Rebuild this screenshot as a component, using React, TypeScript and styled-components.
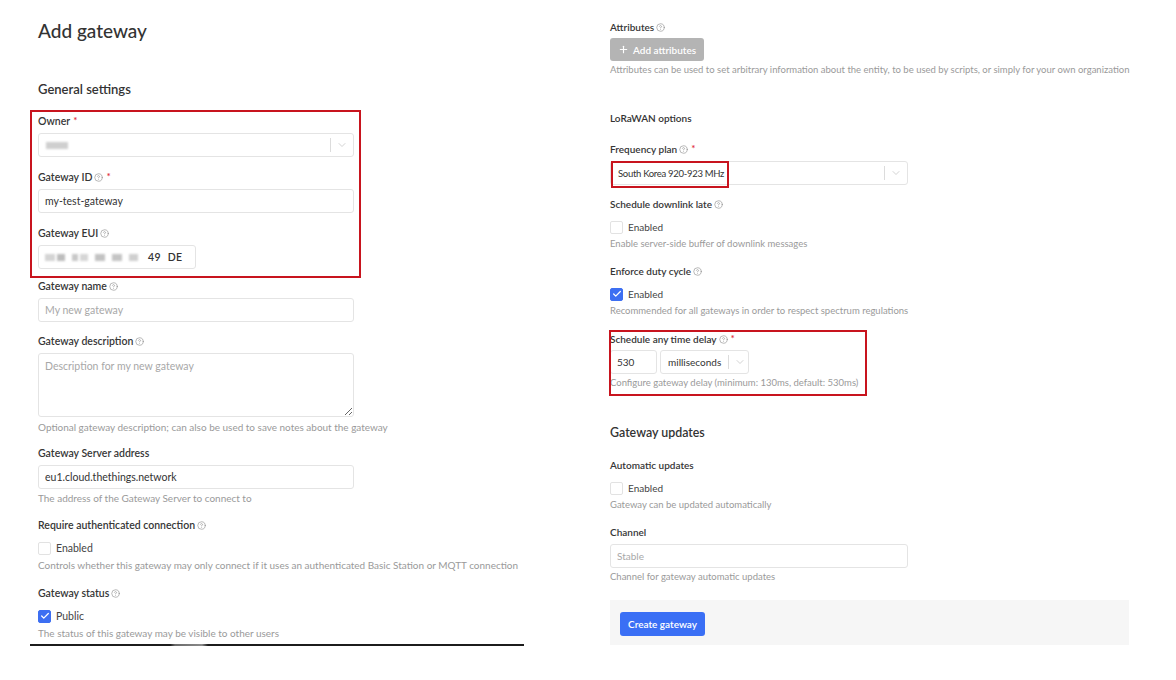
import React from 'react';
import styled, { createGlobalStyle } from 'styled-components';
import { CircleHelp, ChevronDown, Plus, Check } from 'lucide-react';

const GlobalStyle = createGlobalStyle`
  html, body {
    margin: 0;
    padding: 0;
    background: #ffffff;
  }
  body {
    font-family: Lato, "Liberation Sans", sans-serif;
    color: #333333;
    -webkit-font-smoothing: antialiased;
  }
  * {
    box-sizing: border-box;
  }
`;

const Page = styled.div`
  display: flex;
  width: 1176px;
  height: 680px;
  overflow: hidden;
`;

// the two halves of the source screenshot were captured at slightly different zoom
const LeftColumn = styled.div`
  width: 494px;
  margin-left: 30px;
  padding: 19px 0 0 8px;
  font-size: 10.5px;
`;

const RightColumn = styled.div`
  width: 519px;
  margin-left: 86px;
  padding-top: 19px;
  font-size: 10px;
`;

const PageTitle = styled.h1`
  margin: 0;
  font-size: 19px;
  line-height: 24px;
  font-weight: 500;
  color: #333;
`;

const SectionTitle = styled.h2<{ $top: number }>`
  margin: ${(p) => p.$top}px 0 0;
  font-size: 1.24em;
  line-height: 18px;
  font-weight: 600;
  color: #333;
`;

const SubTitle = styled.h3<{ $top: number }>`
  margin: ${(p) => p.$top}px 0 15px;
  font-size: 1em;
  line-height: 16px;
  font-weight: 600;
  color: #333;
`;

const Highlight = styled.div`
  width: 331px;
  margin: 12px 0 0 -8px;
  padding: 1px 5px 7px 6px;
  border: 2px solid #c8141e;
`;

const Field = styled.div<{ $gap?: number }>`
  position: relative;
  margin-bottom: ${(p) => (p.$gap === undefined ? 12 : p.$gap)}px;
`;

const Label = styled.div`
  display: flex;
  align-items: center;
  height: 16px;
  margin-bottom: 4px;
  font-size: 1em;
  font-weight: 600;
  color: #363636;
  white-space: nowrap;
`;

const Help = styled(CircleHelp)`
  margin-left: 2px;
  color: #8a8a8a;
`;

const Required = styled.span`
  align-self: flex-start;
  margin: 1px 0 0 3px;
  font-size: 10px;
  color: #e0303a;
`;

const TextInput = styled.input<{ $width?: number }>`
  display: block;
  width: ${(p) => p.$width || 316}px;
  height: 24px;
  padding: 0 6px;
  border: 1px solid #e4e4e4;
  border-radius: 3px;
  font-family: inherit;
  font-size: 1em;
  color: #333;
  background: #fff;
  outline: none;

  &::placeholder {
    color: #a8a8a8;
  }
`;

const TextArea = styled.textarea`
  display: block;
  width: 316px;
  height: 64px;
  margin: 0;
  padding: 6px;
  border: 1px solid #e4e4e4;
  border-radius: 3px;
  font-family: inherit;
  font-size: 1em;
  color: #333;
  outline: none;

  &::placeholder {
    color: #a8a8a8;
  }
`;

const SelectBox = styled.div<{ $width: number }>`
  display: flex;
  align-items: center;
  width: ${(p) => p.$width}px;
  height: 24px;
  border: 1px solid #e4e4e4;
  border-radius: 3px;
  background: #fff;
`;

const SelectValue = styled.div<{ $tight?: boolean }>`
  position: relative;
  flex: 1;
  display: flex;
  align-items: center;
  height: 100%;
  padding: 0 7px;
  font-size: ${(p) => (p.$tight ? '0.95em' : '1em')};
  letter-spacing: ${(p) => (p.$tight ? '-0.3px' : 'normal')};
  color: #333;
  white-space: nowrap;
`;

const Indicator = styled.div`
  display: flex;
  align-items: center;
  height: 100%;
  padding-right: 5px;
  color: #c4c4c4;
`;

const Separator = styled.span`
  width: 1px;
  height: 14px;
  margin-right: 5px;
  background: #dcdcdc;
`;

const Blur = styled.span<{ $w: number; $shade: string }>`
  display: inline-block;
  width: ${(p) => p.$w}px;
  height: 7px;
  margin-right: 2px;
  background: ${(p) => p.$shade};
  filter: blur(1.2px);
`;

const EuiBox = styled.div`
  display: flex;
  align-items: center;
  width: 158px;
  height: 24px;
  padding: 0 6px;
  border: 1px solid #e4e4e4;
  border-radius: 3px;
`;

const EuiGroup = styled.span`
  display: inline-flex;
  margin-right: 5px;
`;

const EuiByte = styled.span`
  margin-left: 3px;
  margin-right: 4px;
  font-size: 1em;
  font-weight: 600;
  letter-spacing: 0.3px;
  color: #333;
`;

const Hint = styled.div<{ $top?: number }>`
  margin-top: ${(p) => (p.$top === undefined ? 2 : p.$top)}px;
  font-size: 0.95em;
  line-height: 14px;
  color: #9a9a9a;
  white-space: nowrap;
`;

const CheckRow = styled.label`
  display: flex;
  align-items: center;
  height: 16px;
  margin-top: 7px;
  font-size: 1em;
  color: #444;
`;

const Box = styled.span<{ $checked?: boolean }>`
  display: flex;
  align-items: center;
  justify-content: center;
  width: 13px;
  height: 13px;
  margin-right: 5px;
  border: 1px solid ${(p) => (p.$checked ? '#3d6ff2' : '#e2e2e2')};
  border-radius: 2px;
  background: ${(p) => (p.$checked ? '#3d6ff2' : '#fff')};
  color: #fff;
`;

const GrayButton = styled.button`
  display: flex;
  align-items: center;
  gap: 4px;
  height: 23px;
  padding: 0 8px;
  margin-top: -1px;
  border: none;
  border-radius: 3px;
  background: #b4b4b4;
  color: #fff;
  font-family: inherit;
  font-size: 1em;
  font-weight: 600;
`;

const UnitRow = styled.div`
  display: flex;
  gap: 3px;
  margin-top: -1px;
`;

const Annotation = styled.div<{ $w: number; $h: number; $x: number; $y: number }>`
  position: absolute;
  left: ${(p) => p.$x}px;
  top: ${(p) => p.$y}px;
  width: ${(p) => p.$w}px;
  height: ${(p) => p.$h}px;
  border: 2px solid #c8141e;
  pointer-events: none;
`;

const Footer = styled.div`
  margin-top: 16px;
  padding: 12px 10px;
  height: 45px;
  background: #f6f6f6;
`;

const PrimaryButton = styled.button`
  height: 24px;
  padding: 0 8px;
  border: none;
  border-radius: 3px;
  background: #3a6ff5;
  color: #fff;
  font-family: inherit;
  font-size: 1em;
  font-weight: 600;
`;

const BottomRule = styled.div`
  width: 494px;
  height: 2px;
  margin: 4px 0 0 -8px;
  background: linear-gradient(
    to right,
    #1c1c1c 0,
    #1c1c1c 140px,
    #6a6a6a 145px,
    #8a8a8a 172px,
    #1c1c1c 178px,
    #1c1c1c 100%
  );
`;

function HelpIcon() {
  return <Help size={9} strokeWidth={1.6} />;
}

type Blob = [number, string];
const euiBlobs: Blob[][] = [
  [[10, '#d4d4d4'], [8, '#bdbdbd']],
  [[6, '#c8c8c8'], [8, '#d6d6d6']],
  [[10, '#c2c2c2']],
  [[10, '#c4c4c4']],
  [[9, '#cfcfcf']],
];

function Checkbox({ checked, text }: { checked?: boolean; text: string }) {
  return (
    <CheckRow>
      <Box $checked={checked}>{checked && <Check size={10} strokeWidth={3} />}</Box>
      {text}
    </CheckRow>
  );
}

function Select({
  width,
  tight,
  children,
}: {
  width: number;
  tight?: boolean;
  children: React.ReactNode;
}) {
  return (
    <SelectBox $width={width}>
      <SelectValue $tight={tight}>{children}</SelectValue>
      <Indicator>
        <Separator />
        <ChevronDown size={12} strokeWidth={1.5} />
      </Indicator>
    </SelectBox>
  );
}

export default function App() {
  return (
    <>
      <GlobalStyle />
      <Page>
        <LeftColumn>
          <PageTitle>Add gateway</PageTitle>
          <SectionTitle $top={37}>General settings</SectionTitle>

          <Highlight>
            <Field>
              <Label>
                Owner<Required>*</Required>
              </Label>
              <Select width={316}>
                <Blur $w={22} $shade="#cfcfcf" />
              </Select>
            </Field>
            <Field>
              <Label>
                Gateway ID <HelpIcon />
                <Required>*</Required>
              </Label>
              <TextInput defaultValue="my-test-gateway" />
            </Field>
            <Field $gap={0}>
              <Label>
                Gateway EUI <HelpIcon />
              </Label>
              <EuiBox>
                {euiBlobs.map((group, i) => (
                  <EuiGroup key={i}>
                    {group.map(([w, shade], j) => (
                      <Blur key={j} $w={w} $shade={shade} />
                    ))}
                  </EuiGroup>
                ))}
                <EuiByte>49</EuiByte>
                <EuiByte>DE</EuiByte>
              </EuiBox>
            </Field>
          </Highlight>

          <Field $gap={11}>
            <Label>
              Gateway name <HelpIcon />
            </Label>
            <TextInput placeholder="My new gateway" />
          </Field>
          <Field $gap={11}>
            <Label>
              Gateway description <HelpIcon />
            </Label>
            <TextArea placeholder="Description for my new gateway" />
            <Hint $top={3}>Optional gateway description; can also be used to save notes about the gateway</Hint>
          </Field>
          <Field>
            <Label>Gateway Server address</Label>
            <TextInput defaultValue="eu1.cloud.thethings.network" />
            <Hint>The address of the Gateway Server to connect to</Hint>
          </Field>
          <Field $gap={13}>
            <Label>
              Require authenticated connection <HelpIcon />
            </Label>
            <Checkbox text="Enabled" />
            <Hint>Controls whether this gateway may only connect if it uses an authenticated Basic Station or MQTT connection</Hint>
          </Field>
          <Field $gap={0}>
            <Label>
              Gateway status <HelpIcon />
            </Label>
            <Checkbox checked text="Public" />
            <Hint>The status of this gateway may be visible to other users</Hint>
          </Field>
          <BottomRule />
        </LeftColumn>

        <RightColumn>
          <Field $gap={0}>
            <Label>
              Attributes <HelpIcon />
            </Label>
            <GrayButton>
              <Plus size={11} strokeWidth={2.5} />
              Add attributes
            </GrayButton>
            <Hint>Attributes can be used to set arbitrary information about the entity, to be used by scripts, or simply for your own organization</Hint>
          </Field>

          <SubTitle $top={33}>LoRaWAN options</SubTitle>

          <Field $gap={11}>
            <Label>
              Frequency plan <HelpIcon />
              <Required>*</Required>
            </Label>
            <Select width={298} tight>
              South Korea 920-923 MHz
              <Annotation $x={0} $y={-1} $w={118} $h={27} />
            </Select>
          </Field>
          <Field>
            <Label>
              Schedule downlink late <HelpIcon />
            </Label>
            <Checkbox text="Enabled" />
            <Hint>Enable server-side buffer of downlink messages</Hint>
          </Field>
          <Field $gap={13}>
            <Label>
              Enforce duty cycle <HelpIcon />
            </Label>
            <Checkbox checked text="Enabled" />
            <Hint>Recommended for all gateways in order to respect spectrum regulations</Hint>
          </Field>
          <Field $gap={0}>
            <Label>
              Schedule any time delay <HelpIcon />
              <Required>*</Required>
            </Label>
            <UnitRow>
              <TextInput $width={47} defaultValue="530" />
              <Select width={89}>milliseconds</Select>
            </UnitRow>
            <Hint>Configure gateway delay (minimum: 130ms, default: 530ms)</Hint>
            <Annotation $x={-1} $y={-1} $w={258} $h={66} />
          </Field>

          <SectionTitle $top={34}>Gateway updates</SectionTitle>

          <Field>
            <Label style={{ marginTop: 15 }}>Automatic updates</Label>
            <Checkbox text="Enabled" />
            <Hint>Gateway can be updated automatically</Hint>
          </Field>
          <Field $gap={0}>
            <Label>Channel</Label>
            <TextInput $width={298} placeholder="Stable" />
            <Hint>Channel for gateway automatic updates</Hint>
          </Field>

          <Footer>
            <PrimaryButton>Create gateway</PrimaryButton>
          </Footer>
        </RightColumn>
      </Page>
    </>
  );
}
